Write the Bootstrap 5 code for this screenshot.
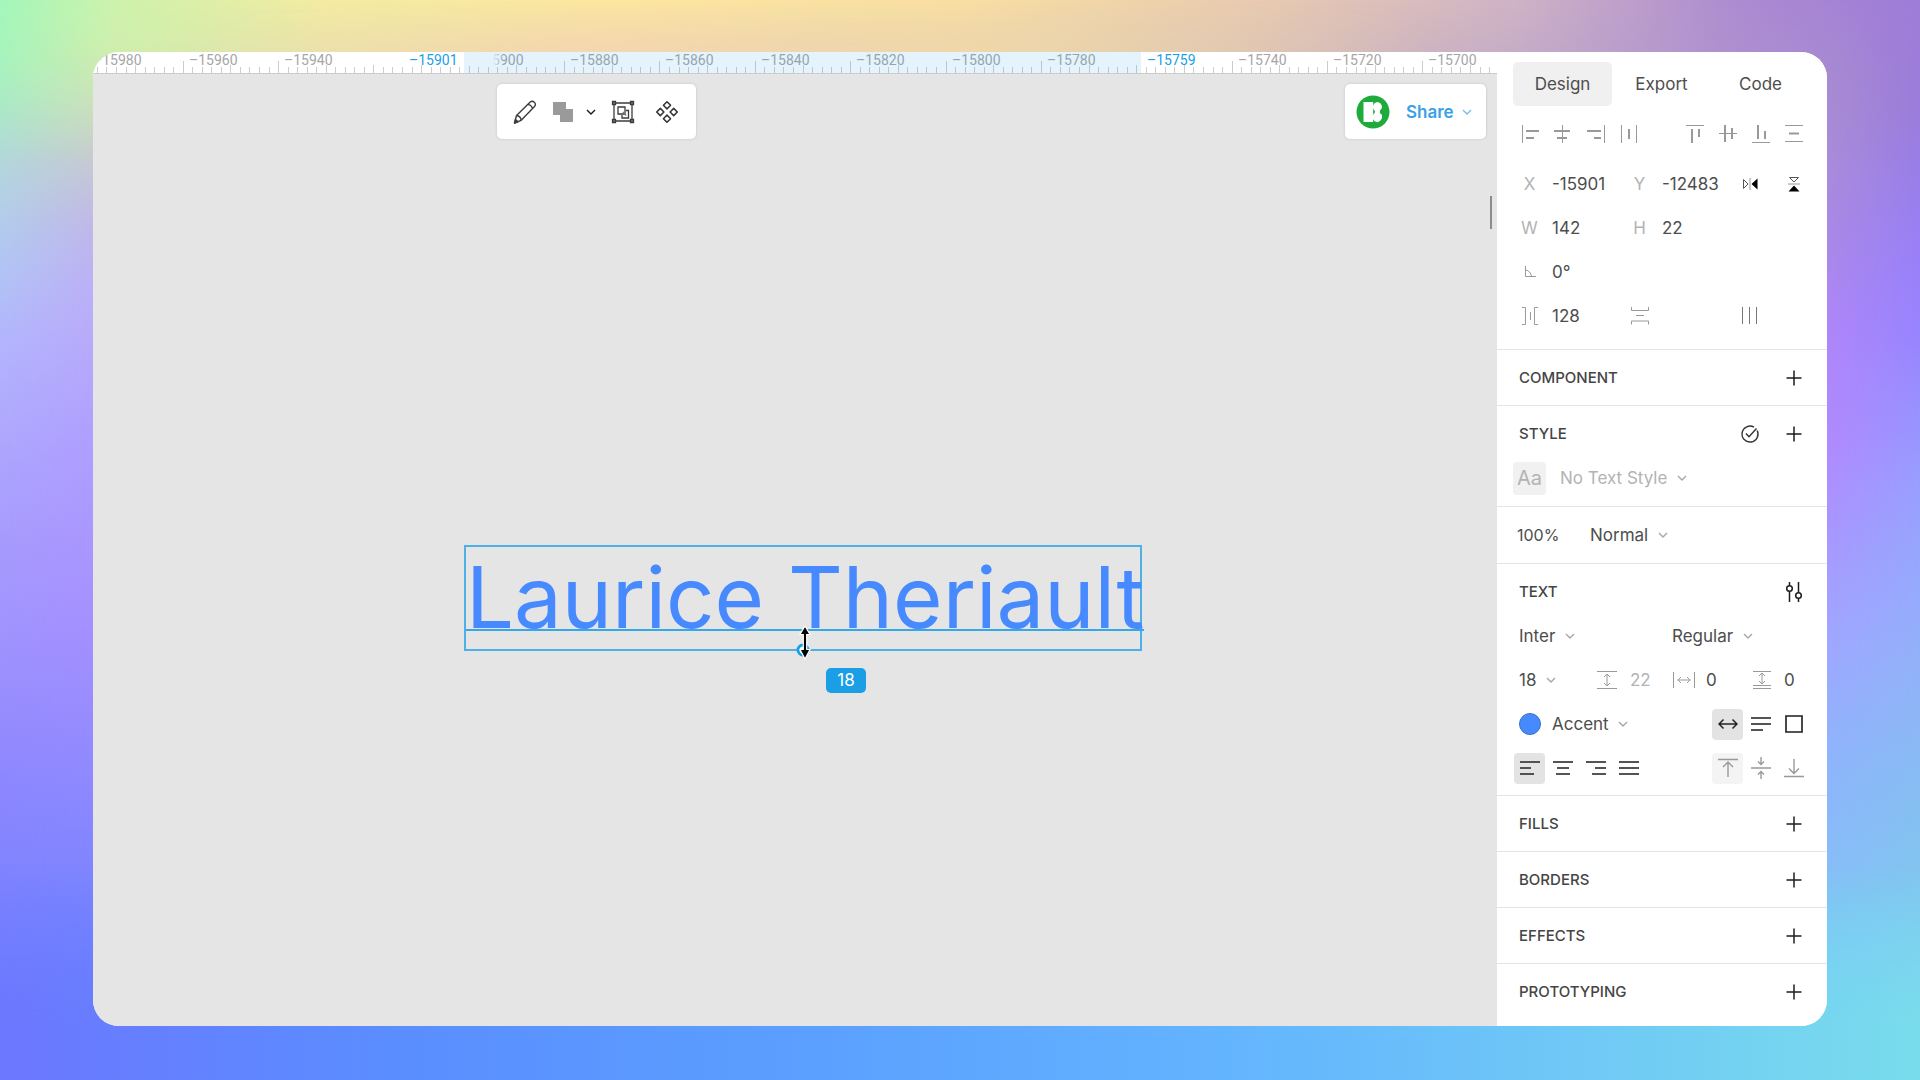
<!DOCTYPE html>
<html lang="en">
<head>
<meta charset="utf-8">
<meta name="viewport" content="width=device-width, initial-scale=1">
<title>Design editor</title>
<link href="https://cdn.jsdelivr.net/npm/bootstrap@5.3.0/dist/css/bootstrap.min.css" rel="stylesheet">
<style>
  body { font-family: Inter, "Open Sans", sans-serif; font-size: 17px; line-height: 24px; color: #4d4d4d; }

  /* Colourful backdrop: one gradient per screen edge, blended inwards */
  .backdrop { background: linear-gradient(to bottom, #d0efac 0, #d5e6b2 4%, #c8cdd0 14%, #c0b8ea 21%, #bcb0f8 27%, #b0a0ff 40%, #a590ff 58%, #8a88ff 75%, #6f82ff 90%, #667dff 100%); padding: 52px 93px 54px; isolation: isolate; }
  .backdrop-edge { z-index: -1; }
  .edge-left { width: 93px; background: linear-gradient(to bottom, #a4f6ba 0, #aee4cc 9%, #b3d2e2 17%, #b1c6f2 24%, #b2b6fc 31%, #aea8fd 40%, #a79afd 50%, #9e92fe 60%, #9088ff 70%, #7a82ff 85%, #6c7aff 100%); -webkit-mask-image: linear-gradient(to left, transparent, #000); mask-image: linear-gradient(to left, transparent, #000); }
  .edge-right { background: linear-gradient(to bottom, #ad90cc 0, #ab92d0 6%, #a98adf 18%, #ae86f8 30%, #b08aff 41%, #a898ff 50%, #9fa8ff 60%, #8fb4fd 70%, #88bdf8 80%, #76d2f5 93%, #75dcef 100%); -webkit-mask-image: linear-gradient(to right, transparent 5%, #000 95%); mask-image: linear-gradient(to right, transparent 5%, #000 95%); }
  .edge-outer { width: 93px; background: linear-gradient(to bottom, #9c7cd8 0, #9a7cdc 10%, #9880f8 24%, #9884ff 31%, #98a0ff 46%, #93b0fa 60%, #84bff0 75%, #7fcdf0 90%, #7cdcec 100%); -webkit-mask-image: linear-gradient(to right, transparent, #000); mask-image: linear-gradient(to right, transparent, #000); }
  .edge-top { background: linear-gradient(to right, #a4f6ba 0, #ccf2ac 6%, #f4eba2 17%, #fde69f 32%, #f9dfa2 50%, #e8cab0 66%, #cfb2c5 79%, #ae8cd0 90%, #9c7cd8 100%); -webkit-mask-image: linear-gradient(to bottom, #000 0, transparent 15%); mask-image: linear-gradient(to bottom, #000 0, transparent 15%); }
  .edge-mid { height: 90px; background: linear-gradient(to right, #fbd0b400 8%, #fbd0b4 30%, #f5d4b0 42%, #f5daa8 52%, #e6c8b400 75%); -webkit-mask-image: linear-gradient(to bottom, transparent 0, #000 100%); mask-image: linear-gradient(to bottom, transparent 0, #000 100%); }
  .edge-bottom { background: linear-gradient(to right, #6c77ff 0, #5a8dff 20%, #5b9fff 42%, #62b2ff 62%, #6fc8f6 82%, #79dcec 100%); -webkit-mask-image: linear-gradient(to top, #000 4%, transparent 20%); mask-image: linear-gradient(to top, #000 4%, transparent 20%); }

  .app-window { border-radius: 26px; background: #fff; }
  .workspace { min-width: 0; background: #e5e5e5; }

  /* Ruler */
  .ruler { height: 22px; background: #fff; border-bottom: 1px solid #ccc; font-family: Roboto, sans-serif; font-size: 14px; line-height: 17px; color: #a6a6a6; }
  .ruler svg { width: 100%; height: 21px; }
  .ruler-range { background: #27a5e61f; }
  .ruler-label { top: 0; white-space: nowrap; }
  .ruler-edge { color: #1a9fe8; }
  .ruler-fade { background: linear-gradient(to right, #e5f4fc 70%, #e5f4fc00); width: 40px; height: 14px; }

  .floating-bar { height: 55px; background: #fff; border-radius: 5px; box-shadow: 0 0 3px #00000026; }
  .bars { padding: 10px 11px 0 404px; }
  .tools { width: 199px; padding-left: 8px; }
  .tools .plain { height: 40px; }
  .w-pencil { width: 40px; }
  .w-union { width: 36px; }
  .w-more { width: 20px; }
  .w-tool { width: 44px; }
  .share-box { width: 141px; }
  .plain { border: 0; background: none; padding: 0; color: inherit; display: inline-flex; align-items: center; justify-content: center; }
  .share-btn { color: #3aa0e8; font-weight: 600; margin-left: 14px; }
  .scroll-thumb { width: 2px; height: 33px; background: #8c8c8c; right: 5px; top: 144px; }

  /* Selected text layer */
  .layer-box { width: 678px; height: 106px; left: 371px; top: 493px; border: 2px solid #4fb0e6; }
  .layer-text { font-size: 85px; line-height: 102px; color: #478aff; white-space: pre; }
  .layer-base { left: 0; right: -4px; top: 82px; height: 2px; background: #35a8e8; }
  .layer-cursor { left: 327px; top: 79px; }
  .layer-size { left: 360px; top: 121px; width: 40px; height: 25px; border-radius: 5px; background: #1a9ee6; color: #fff; line-height: 25px; }

  /* Inspector */
  .inspector { width: 330px; flex: none; background: #fff; }
  .sec { border-bottom: 1px solid #e4e4e4; padding: 6px 17px 5px 16px; }
  .sec-tall { padding-bottom: 6px; }
  .sec-first { padding-top: 10px; padding-bottom: 11px; }
  .line { height: 44px; display: flex; align-items: center; }
  .align-line { margin: 6px 0; }
  .text-line { padding-left: 6px; }
  .sec-title { font-size: 15px; line-height: 20px; font-weight: 500; margin: 0 auto 0 6px; color: #454545; }
  .tab-btn { flex: 1; height: 44px; border-radius: 5px; }
  .tab-btn.active { background: #f0f0f0; }
  .cell { width: 33px; height: 33px; flex: none; border-radius: 4px; }
  .cell.on, .cell.soft { width: 31px; height: 31px; margin: 0 1px; }
  .cell.on { background: #e3e3e3; color: #222; }
  .cell.soft { background: #f4f4f4; }
  .ink { color: #1c1c1c; }
  .dim { color: #999; }
  .field { width: 110px; display: flex; align-items: center; }
  .num { border: 0; padding: 0; background: none; color: inherit; outline: 0; height: 24px; width: 66px; flex: none; }
  .field .num { margin-left: 6px; }
  .opacity-num { width: 73px; margin-left: 4px; font-size: 16px; }
  .pale { color: #b3b3b3; }
  .metric { margin-right: 10px; }
  .num-mid { width: 42px; }
  .num-wide { width: 44px; }
  .num-s { width: 24px; }
  .pick { appearance: none; -webkit-appearance: none; border: 0; background: none; color: inherit; padding: 0 24px 0 0; height: 24px; }
  .pick-wrap { display: inline-flex; align-items: center; flex: none; }
  .pick-wrap svg { margin-left: -15px; pointer-events: none; color: #a6a6a6; }
  .sample { background: #f1f1f1; font-size: 20px; margin-right: 14px; }
  .style-check { margin-right: 11px; }
  .swatch { width: 22px; height: 22px; border-radius: 50%; background: #478aff; border: 1px solid #3b6fc9; }
  .accent-pick { margin: 0 auto 0 6px; }
  .half { width: 153px; }
  .quarter { width: 77px; }
  svg { display: block; flex: none; }
</style>
</head>
<body>

<svg class="d-none" aria-hidden="true">
  <symbol id="plus" viewBox="0 0 20 20"><path d="M10 2.500v15M2.500 10h15" stroke="currentColor" stroke-width="1.500"/></symbol>
  <symbol id="chev" viewBox="0 0 10 10"><path d="M1 3l4 4 4-4" fill="none" stroke="currentColor" stroke-width="1.400"/></symbol>
</svg>

<div class="backdrop position-relative min-vh-100 d-flex">
  <div class="backdrop-edge edge-right position-absolute top-0 start-0 w-100 h-100"></div>
  <div class="backdrop-edge edge-left position-absolute top-0 start-0 h-100"></div>
  <div class="backdrop-edge edge-outer position-absolute top-0 end-0 h-100"></div>
  <div class="backdrop-edge edge-top position-absolute top-0 start-0 w-100 h-100"></div>
  <div class="backdrop-edge edge-mid position-absolute top-0 start-0 w-100"></div>
  <div class="backdrop-edge edge-bottom position-absolute top-0 start-0 w-100 h-100"></div>

  <div class="app-window d-flex flex-grow-1 overflow-hidden">
    <main class="workspace position-relative flex-grow-1 overflow-hidden">
      <div class="ruler position-relative overflow-hidden" id="ruler"></div>

      <div class="bars d-flex justify-content-between">
        <div class="floating-bar tools d-flex align-items-center" role="toolbar" aria-label="Tools">
          <button class="plain w-pencil" aria-label="Edit"><svg width="24" height="24" viewBox="0 0 24 24" fill="none" stroke="#3c3c3c" stroke-width="1.400" stroke-linejoin="round"><path d="M1.500 23l2-7.500L17 2.200c1.400-1.200 3-1.100 4.300.1s1.500 3 .2 4.300L8.200 20.300zM3.500 15.500c2.500.3 4.300 2 4.700 4.800M14.800 4.400c2.700.4 4.300 2 4.600 4.600"/><path d="M1.500 23l1-3.500 2.400 2.300z" fill="#3c3c3c"/></svg></button>
          <button class="plain w-union" aria-label="Union"><svg width="20" height="20" viewBox="0 0 20 20"><path d="M0 0h13v7h7v13H7v-7H0z" fill="#9a9a9a"/></svg></button>
          <button class="plain ink w-more" aria-label="More shapes"><svg width="10" height="10"><use href="#chev"/></svg></button>
          <button class="plain w-tool" aria-label="Group"><svg width="24" height="24" viewBox="0 0 24 24" fill="none" stroke="#3c3c3c" stroke-width="1.300"><path d="M3 3h18v18H3z"/><path d="M7 7h7v7H7zM15 10.500h2.500V18H11v-3"/><path d="M12 12l3 3.500" stroke="#777"/><g fill="#777"><path d="M1.500 1.500h3v3h-3zM19.500 1.500h3v3h-3zM1.500 19.500h3v3h-3zM19.500 19.500h3v3h-3z"/></g></svg></button>
          <button class="plain w-tool" aria-label="Component"><svg width="24" height="24" viewBox="0 0 24 24" fill="none" stroke="#333" stroke-width="1.500" stroke-linejoin="round"><path d="M12 1.700L15.600 5.300 12 8.900 8.400 5.300zM12 15.100l3.600 3.600L12 22.300l-3.600-3.600zM5.300 8.400L8.900 12l-3.600 3.600L1.700 12zM18.700 8.400l3.600 3.600-3.600 3.600-3.600-3.600z"/></svg></button>
        </div>
        <div class="floating-bar share-box d-flex align-items-center">
          <svg class="ms-2" width="39" height="34" viewBox="0 0 39 34" role="img" aria-label="Team"><circle cx="20" cy="17" r="16.500" fill="#1faa3c"/><path d="M10.500 7h9.700v3.400L21.700 8l2.600-1 2.800 1 1.700 2.500v2.800L27 15.500v2.600l2 2v3.200L27 26l-2.800 1.200-2.600-1-1.400-2V27h-9.700zM20.200 13.500v6.500l2-3.300z" fill="#fff" fill-rule="evenodd"/></svg>
          <button class="plain share-btn">Share<svg class="ms-2" width="10" height="10" opacity=".7"><use href="#chev"/></svg></button>
        </div>
      </div>

      <div class="scroll-thumb position-absolute"></div>

      <div class="layer-box position-absolute">
        <div class="layer-text">Laurice Theriault</div>
        <div class="layer-base position-absolute"></div>
        <svg class="layer-cursor position-absolute" width="24" height="34" viewBox="0 0 24 34"><circle cx="10" cy="24" r="5" fill="#fff" stroke="#1a9ee6" stroke-width="3"/><path d="M12 0l5 8.500h-3.300v15H17L12 33l-5-9.500h3.300v-15H7z" fill="#000" stroke="#fff" stroke-width="1.200"/></svg>
        <div class="layer-size position-absolute text-center">18</div>
      </div>
    </main>

    <aside class="inspector">
      <section class="sec sec-first">
        <div class="d-flex" role="tablist">
          <button class="plain tab-btn active" role="tab">Design</button>
          <button class="plain tab-btn" role="tab">Export</button>
          <button class="plain tab-btn" role="tab">Code</button>
        </div>
        <div class="line align-line dim">
          <button class="plain cell" aria-label="Align left"><svg width="20" height="20" stroke="currentColor"><path d="M2.500 1v18"/><path d="M6 7h13M6 14h8" stroke-width="2"/></svg></button>
          <button class="plain cell" aria-label="Align centre"><svg width="20" height="20" stroke="currentColor"><path d="M9.500 1v18"/><path d="M1 7h16M4 14h10" stroke-width="2"/></svg></button>
          <button class="plain cell" aria-label="Align right"><svg width="20" height="20" stroke="currentColor"><path d="M18.500 1v18"/><path d="M1 7h14M8 14h7" stroke-width="2"/></svg></button>
          <button class="plain cell" aria-label="Distribute horizontally"><svg width="20" height="20" stroke="currentColor"><path d="M2.500 1v18M17.500 1v18"/><path d="M10 5v10" stroke-width="2"/></svg></button>
          <button class="plain cell ms-auto" aria-label="Align top"><svg width="20" height="20" stroke="currentColor"><path d="M1 1.500h18"/><path d="M7 5v14M14 5v8" stroke-width="2"/></svg></button>
          <button class="plain cell" aria-label="Align middle"><svg width="20" height="20" stroke="currentColor"><path d="M1 9.500h18"/><path d="M7 1v17M14 4v11" stroke-width="2"/></svg></button>
          <button class="plain cell" aria-label="Align bottom"><svg width="20" height="20" stroke="currentColor"><path d="M1 18.500h18"/><path d="M7 1v14M14 7v8" stroke-width="2"/></svg></button>
          <button class="plain cell" aria-label="Distribute vertically"><svg width="20" height="20" stroke="currentColor"><path d="M1 1.500h18M1 17.500h18"/><path d="M5 9.500h10" stroke-width="2"/></svg></button>
        </div>
        <div class="line">
          <div class="field"><label class="cell plain pale" for="px">X</label><input class="num" id="px" value="-15901"></div>
          <div class="field"><label class="cell plain pale" for="py">Y</label><input class="num" id="py" value="-12483"></div>
          <button class="plain cell" aria-label="Flip horizontally"><svg width="16" height="16" viewBox="0 0 16 16"><path d="M1.500 3.500v9L6 8z" fill="none" stroke="#555"/><path d="M8 2v12" stroke="#999"/><path d="M15.500 2.500v11L9.500 8z"/></svg></button>
          <button class="plain cell ms-auto" aria-label="Flip vertically"><svg width="16" height="16" viewBox="0 0 16 16"><path d="M3.500 1.500h9L8 6z" fill="none" stroke="#555"/><path d="M2 8h12" stroke="#999"/><path d="M2.500 15.500h11L8 9.500z"/></svg></button>
        </div>
        <div class="line">
          <div class="field"><label class="cell plain pale" for="pw">W</label><input class="num" id="pw" value="142"></div>
          <div class="field"><label class="cell plain pale" for="ph">H</label><input class="num" id="ph" value="22"></div>
        </div>
        <div class="line">
          <div class="field"><label class="cell plain dim" for="pr" aria-label="Rotation"><svg width="14" height="14" fill="none" stroke="currentColor"><path d="M2.500 1v10.500H13M2.500 5c3.500.5 5.500 3 6 6.500"/></svg></label><input class="num" id="pr" value="0°"></div>
        </div>
        <div class="line">
          <div class="field"><label class="cell plain dim" for="pg" aria-label="Horizontal gap"><svg width="20" height="20" fill="none" stroke="currentColor"><path d="M2 1.500h3.500v17H2M18 1.500h-3.500v17H18"/><path d="M10.500 6v8"/></svg></label><input class="num" id="pg" value="128"></div>
          <div class="field"><label class="cell plain dim" for="pv" aria-label="Vertical gap"><svg width="20" height="20" fill="none" stroke="currentColor"><path d="M1.500 1v3.500h17V1M1.500 18.500v-3.500h17v3.500M6 9.500h8"/></svg></label><input class="num" id="pv" value=""></div>
          <button class="plain cell dim" aria-label="Columns"><svg width="20" height="20" stroke="#777"><path d="M2.500 1v17M9.500 1v17M16.500 1v17"/></svg></button>
        </div>
      </section>

      <section class="sec"><div class="line"><h2 class="sec-title">COMPONENT</h2><button class="plain cell ink" aria-label="Add component"><svg width="20" height="20"><use href="#plus"/></svg></button></div></section>

      <section class="sec sec-tall">
        <div class="line"><h2 class="sec-title">STYLE</h2>
          <button class="plain cell style-check" aria-label="Apply style"><svg width="20" height="20" viewBox="0 0 20 20" fill="none" stroke="#333" stroke-width="1.400"><path d="M17.200 6.500A8 8 0 1 1 14 3.100M6 9.500l3 3.200 7.500-8.200"/></svg></button>
          <button class="plain cell ink" aria-label="Add style"><svg width="20" height="20"><use href="#plus"/></svg></button></div>
        <div class="line pale"><span class="cell plain sample">Aa</span>
          <span class="pick-wrap"><select class="pick" aria-label="Text style"><option>No Text Style</option></select><svg width="10" height="10"><use href="#chev"/></svg></span></div>
      </section>

      <section class="sec sec-tall"><div class="line">
        <input class="num opacity-num" aria-label="Opacity" value="100%">
        <span class="pick-wrap"><select class="pick" aria-label="Blend mode"><option>Normal</option></select><svg width="10" height="10"><use href="#chev"/></svg></span>
      </div></section>

      <section class="sec">
        <div class="line"><h2 class="sec-title">TEXT</h2><button class="plain cell ink" aria-label="Text settings"><svg width="20" height="20" fill="none" stroke="currentColor" stroke-width="1.500"><path d="M5.500 0v3.500M5.500 9.500V20M14.500 0v10.500M14.500 16.500V20"/><circle cx="5.500" cy="6.500" r="2.800"/><circle cx="14.500" cy="13.500" r="2.800"/></svg></button></div>
        <div class="line text-line">
          <span class="pick-wrap half"><select class="pick" aria-label="Font family"><option>Inter</option></select><svg width="10" height="10"><use href="#chev"/></svg></span>
          <span class="pick-wrap"><select class="pick" aria-label="Font weight"><option>Regular</option></select><svg width="10" height="10"><use href="#chev"/></svg></span>
        </div>
        <div class="line text-line">
          <span class="pick-wrap quarter"><select class="pick" aria-label="Font size"><option>18</option></select><svg width="10" height="10"><use href="#chev"/></svg></span>
          <label class="plain dim metric" for="lh" aria-label="Line height"><svg width="24" height="20" fill="none" stroke="currentColor"><path d="M1 1.500h20M1 18.500h20M11 4.500v11M8 7l3-3 3 3M8 13l3 3 3-3"/></svg></label><input class="num pale num-mid" id="lh" value="22">
          <label class="plain dim metric" for="ls" aria-label="Letter spacing"><svg width="24" height="20" fill="none" stroke="currentColor"><path d="M1.500 2v16M22.500 2v16M5.500 10h13M9 7l-3 3 3 3M15 7l3 3-3 3"/></svg></label><input class="num num-wide" id="ls" value="0">
          <label class="plain dim metric" for="ps" aria-label="Paragraph spacing"><svg width="24" height="20" fill="none" stroke="currentColor"><path d="M3 1.500h18M3 15.500h18M3 18.500h18M12 3.500v10M9 6l3-3 3 3M9 11l3 3 3-3"/></svg></label><input class="num num-s" id="ps" value="0">
        </div>
        <div class="line">
          <button class="plain cell" aria-label="Text colour"><span class="swatch"></span></button>
          <span class="pick-wrap accent-pick"><select class="pick" aria-label="Colour style"><option>Accent</option></select><svg width="10" height="10"><use href="#chev"/></svg></span>
          <button class="plain cell on" aria-label="Auto width"><svg width="20" height="20" fill="none" stroke="currentColor" stroke-width="1.500"><path d="M1 10h18M5.500 5.500L1 10l4.500 4.500M14.500 5.500L19 10l-4.500 4.500"/></svg></button>
          <button class="plain cell ink" aria-label="Auto height"><svg width="20" height="20" stroke="currentColor" stroke-width="1.600"><path d="M0 4h20M0 10h20M0 16h12"/></svg></button>
          <button class="plain cell ink" aria-label="Fixed size"><svg width="20" height="20" fill="none" stroke="currentColor" stroke-width="1.600"><path d="M2 2h16v16H2z"/></svg></button>
        </div>
        <div class="line">
          <button class="plain cell on" aria-label="Text left"><svg width="20" height="20" stroke="currentColor" stroke-width="1.600"><path d="M0 4h20M0 10h11M0 16h14"/></svg></button>
          <button class="plain cell ink" aria-label="Text centre"><svg width="20" height="20" stroke="currentColor" stroke-width="1.600"><path d="M0 4h20M4 10h12M3 16h14"/></svg></button>
          <button class="plain cell ink" aria-label="Text right"><svg width="20" height="20" stroke="currentColor" stroke-width="1.600"><path d="M0 4h20M9 10h11M6 16h14"/></svg></button>
          <button class="plain cell ink me-auto" aria-label="Justify"><svg width="20" height="20" stroke="currentColor" stroke-width="1.600"><path d="M0 4h20M0 10h20M0 16h20"/></svg></button>
          <button class="plain cell soft dim" aria-label="Top"><svg width="20" height="20" fill="none" stroke="currentColor" stroke-width="1.400"><path d="M0 1.500h20M10 19V4.500M5 9l5-5 5 5"/></svg></button>
          <button class="plain cell dim" aria-label="Middle"><svg width="20" height="22" fill="none" stroke="currentColor" stroke-width="1.400"><path d="M0 11h20M10 0v7M7 4.500l3 3 3-3M10 22v-7M7 17.500l3-3 3 3"/></svg></button>
          <button class="plain cell dim" aria-label="Bottom"><svg width="20" height="20" fill="none" stroke="currentColor" stroke-width="1.400"><path d="M0 18.500h20M10 1v14M5 10.500l5 5 5-5"/></svg></button>
        </div>
      </section>

      <section class="sec"><div class="line"><h2 class="sec-title">FILLS</h2><button class="plain cell ink" aria-label="Add fill"><svg width="20" height="20"><use href="#plus"/></svg></button></div></section>
      <section class="sec"><div class="line"><h2 class="sec-title">BORDERS</h2><button class="plain cell ink" aria-label="Add border"><svg width="20" height="20"><use href="#plus"/></svg></button></div></section>
      <section class="sec"><div class="line"><h2 class="sec-title">EFFECTS</h2><button class="plain cell ink" aria-label="Add effect"><svg width="20" height="20"><use href="#plus"/></svg></button></div></section>
      <section class="sec border-0"><div class="line"><h2 class="sec-title">PROTOTYPING</h2><button class="plain cell ink" aria-label="Add interaction"><svg width="20" height="20"><use href="#plus"/></svg></button></div></section>
    </aside>
  </div>
</div>

<script src="https://cdn.jsdelivr.net/npm/bootstrap@5.3.0/dist/js/bootstrap.bundle.min.js"></script>
<script>
  // Draw the ruler: 142 units of the selected layer cover 677 px
  const ruler = document.getElementById('ruler');
  const scale = 677 / 142, selStart = -15901, selEnd = -15759, selX = 371;
  const at = v => Math.round(selX + (v - selStart) * scale);
  let ticks = '', labels = '';
  for (let v = -15980; v <= -15680; v += 2) {
    const nearEdge = v === -15920 || v === -15900 || v === -15760;
    const h = v % 20 === 0 && !nearEdge ? 12 : v % 10 === 0 ? 8 : 6;
    ticks += `M${at(v) + .5} ${21 - h}v${h}`;
    if (v % 20 === 0 && v !== -15920 && v !== -15760 && v < -15680)
      labels += `<span class="ruler-label position-absolute" style="left:${at(v) + 6}px">–${-v}</span>`;
  }
  ruler.innerHTML = labels
    + `<div class="ruler-range position-absolute top-0 h-100" style="left:${at(selStart)}px;width:${at(selEnd) - at(selStart)}px"></div>`
    + `<div class="ruler-fade position-absolute top-0" style="left:${at(selStart)}px"></div>`
    + `<svg><path d="${ticks}" stroke="#b3b3b3aa" fill="none"/></svg>`
    + `<span class="ruler-label ruler-edge position-absolute" style="left:${at(selStart) - 55}px">–15901</span>`
    + `<span class="ruler-label ruler-edge position-absolute" style="left:${at(selEnd) + 6}px">–15759</span>`;
</script>
</body>
</html>
